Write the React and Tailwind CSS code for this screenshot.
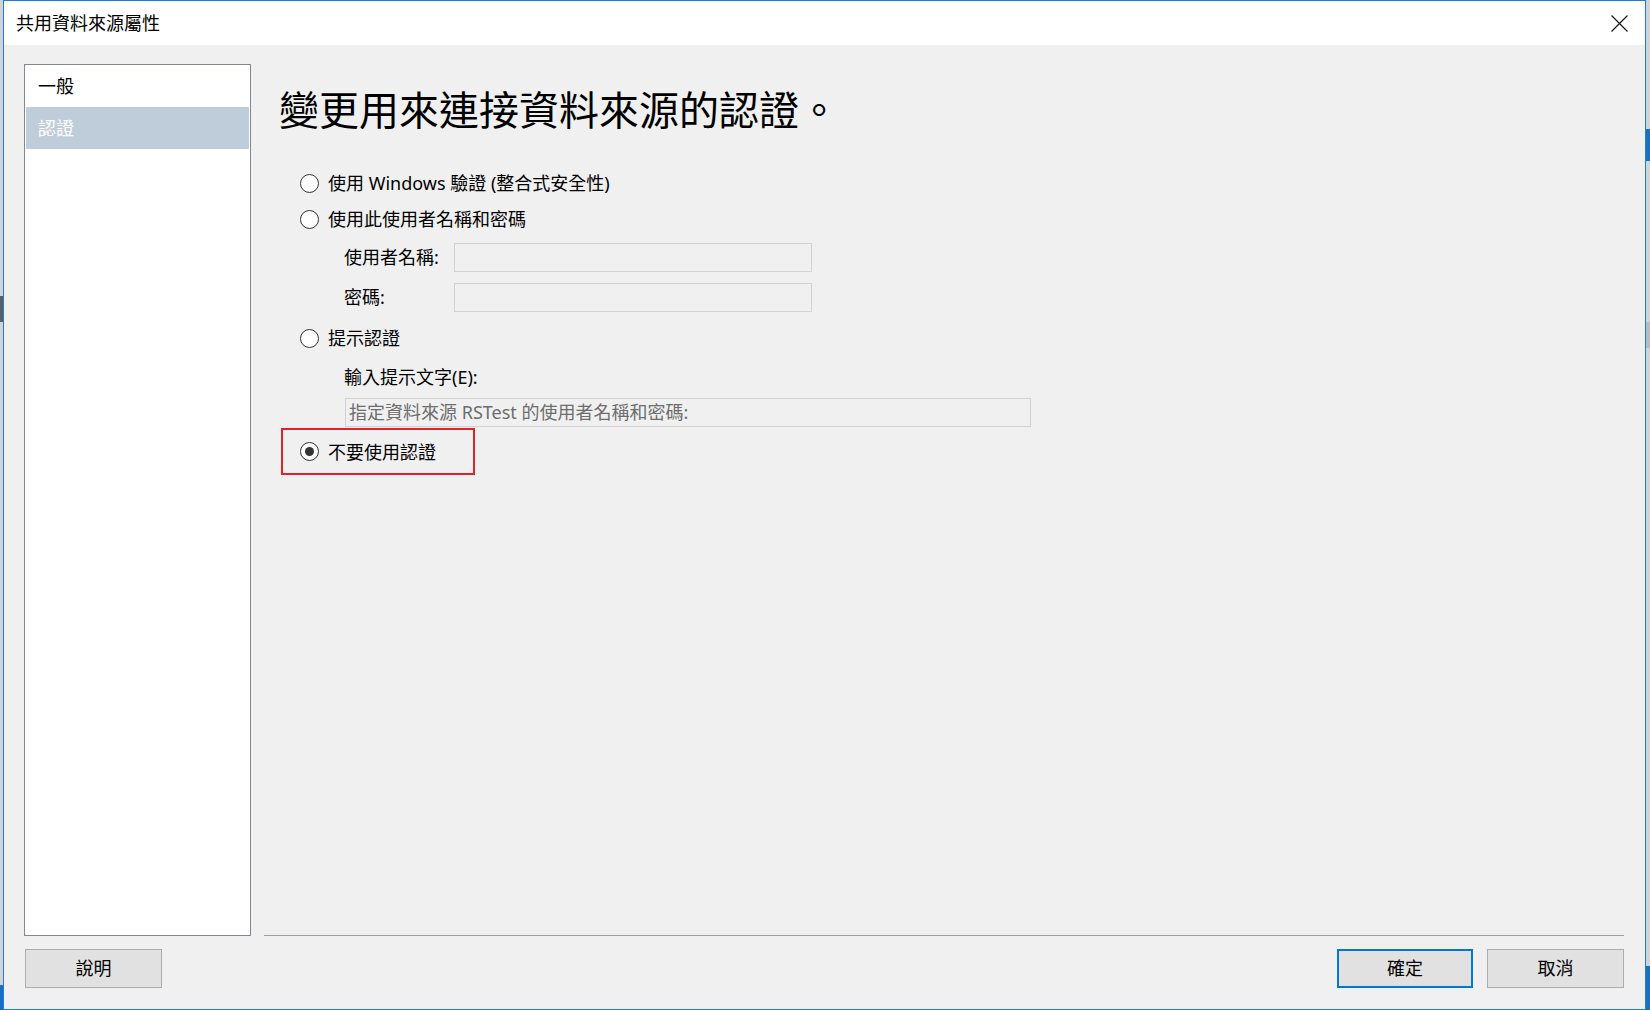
import React from "react";

const FONT = { fontFamily: '"Noto Sans", "Noto Sans CJK TC", sans-serif' };

function Radio({ checked }) {
  return (
    <div className="w-[19px] h-[19px] rounded-full border border-[#333333] bg-white flex items-center justify-center shrink-0">
      {checked && <div className="w-[9px] h-[9px] rounded-full bg-[#333333]" />}
    </div>
  );
}

function RadioRow({ label, checked, className = "" }) {
  return (
    <div className={"flex items-center h-[30px] " + className}>
      <Radio checked={checked} />
      <span className="ml-[9px] text-[18px] leading-[30px] text-black whitespace-nowrap">{label}</span>
    </div>
  );
}

export default function App() {
  return (
    <div className="w-[1650px] h-[1010px] flex bg-[#d6d6d6] overflow-hidden" style={FONT}>
      {/* left outside strip */}
      <div className="w-[3px] h-full flex flex-col bg-[#cfd3d8]">
        <div className="h-[296px]" />
        <div className="h-[26px] bg-[#5a6068]" />
        <div className="flex-1" />
        <div className="h-[25px] bg-[#1a6fc0]" />
      </div>
      {/* dialog */}
      <div className="w-[1643px] h-[1010px] border border-[#1b7fd4] flex flex-col bg-[#f0f0f0]">
        {/* title bar */}
        <div className="h-[44px] bg-white flex items-center justify-between pl-[12px] pr-[16px]">
          <span className="text-[18px] leading-[44px] text-black">共用資料來源屬性</span>
          <svg width="17" height="17" viewBox="0 0 17 17" className="mr-[1px]">
            <path d="M0.5 0.5 L16.5 16.5 M16.5 0.5 L0.5 16.5" stroke="#111" strokeWidth="1.1" fill="none" />
          </svg>
        </div>
        {/* body */}
        <div className="flex-1 flex flex-col px-[20px] pt-[19px]">
          <div className="flex h-[872px]">
            {/* left nav */}
            <div className="w-[227px] h-full border border-[#828790] bg-white flex flex-col">
              <div className="h-[42px] mx-[1px] pl-[12px] flex items-center text-[18px] text-black">一般</div>
              <div className="h-[42px] mx-[1px] pl-[12px] flex items-center text-[18px] text-white bg-[#bfcddb]">認證</div>
            </div>
            {/* right content */}
            <div className="flex-1 flex flex-col ml-[13px] mr-[1px]">
              <div className="flex-1 flex flex-col">
                <div className="mt-[26px] h-[40px] pl-[15px] text-[40px] leading-[40px] text-black whitespace-nowrap">
                  變更用來連接資料來源的認證。
                </div>
                <RadioRow className="mt-[38px] ml-[36px]" label="使用 Windows 驗證 (整合式安全性)" />
                <RadioRow className="mt-[6px] ml-[36px]" label="使用此使用者名稱和密碼" />
                <div className="mt-[9px] h-[29px] flex items-center">
                  <span className="w-[190px] pl-[80px] text-[18px] leading-[29px] text-black whitespace-nowrap">使用者名稱:</span>
                  <div className="w-[358px] h-[29px] border border-[#d2d2d2] bg-[#f0f0f0]" />
                </div>
                <div className="mt-[11px] h-[29px] flex items-center">
                  <span className="w-[190px] pl-[80px] text-[18px] leading-[29px] text-black whitespace-nowrap">密碼:</span>
                  <div className="w-[358px] h-[29px] border border-[#d2d2d2] bg-[#f0f0f0]" />
                </div>
                <RadioRow className="mt-[11px] ml-[36px]" label="提示認證" />
                <div className="mt-[9px] h-[30px] pl-[80px] flex items-center text-[18px] leading-[30px] text-black whitespace-nowrap">
                  輸入提示文字(E):
                </div>
                <div className="mt-[6px] ml-[81px] w-[686px] h-[29px] border border-[#d2d2d2] bg-[#f0f0f0] flex items-center pl-[3px] text-[18px] leading-[27px] text-[#6d6d6d] whitespace-nowrap">
                  指定資料來源 RSTest 的使用者名稱和密碼:
                </div>
                <div className="mt-[1px] ml-[17px] w-[194px] h-[47px] border-2 border-[#e5202a] flex items-center pl-[17px]">
                  <Radio checked />
                  <span className="ml-[9px] text-[18px] leading-[30px] text-black whitespace-nowrap">不要使用認證</span>
                </div>
              </div>
              <div className="h-px bg-[#a0a0a0]" />
            </div>
          </div>
          {/* buttons */}
          <div className="mt-[13px] h-[39px] flex items-center pr-[1px]">
            <button className="ml-[1px] w-[137px] h-[39px] bg-[#e1e1e1] border border-[#adadad] text-[18px] text-black flex items-center justify-center">說明</button>
            <div className="flex-1" />
            <button className="w-[136px] h-[39px] bg-[#e1e1e1] border-2 border-[#0078d7] text-[18px] text-black flex items-center justify-center">確定</button>
            <button className="ml-[14px] w-[137px] h-[39px] bg-[#e1e1e1] border border-[#adadad] text-[18px] text-black flex items-center justify-center">取消</button>
          </div>
        </div>
      </div>
      {/* right outside strip */}
      <div className="w-[4px] h-full flex flex-col bg-[#d0d4d8]">
        <div className="h-[129px]" />
        <div className="h-[32px] bg-[#1a6fc0]" />
        <div className="h-[161px]" />
        <div className="h-[26px] bg-[#b8bcc2]" />
        <div className="flex-1" />
        <div className="h-[44px] bg-[#1a6fc0]" />
      </div>
    </div>
  );
}
